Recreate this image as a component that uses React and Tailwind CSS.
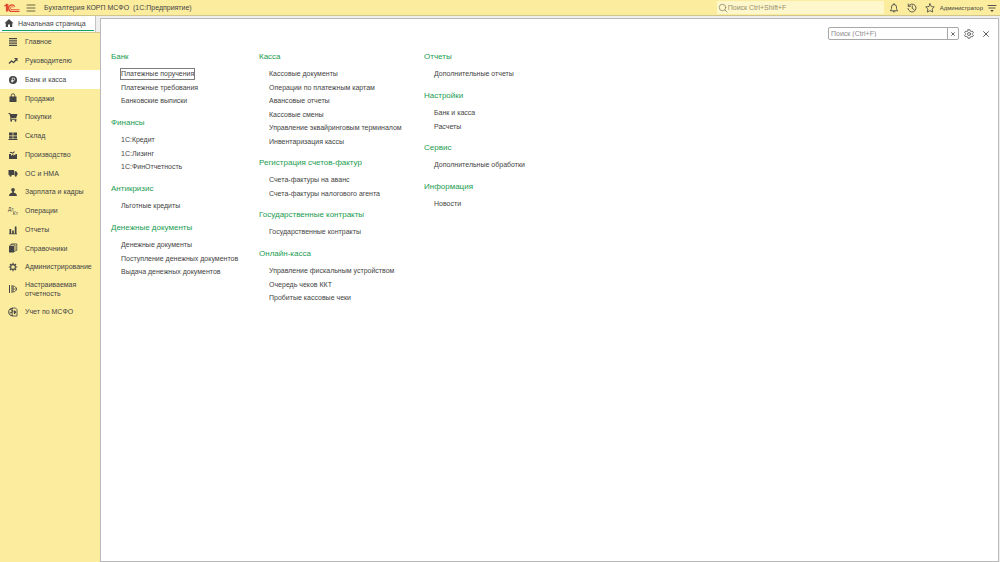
import React from "react";

function Icon({ className = "size-[10px]", viewBox = "0 0 20 20", children }) {
  return (
    <svg aria-hidden="true" viewBox={viewBox} className={`${className} shrink-0`} fill="currentColor">
      {children}
    </svg>
  );
}

const line = { fill: "none", stroke: "currentColor", strokeLinecap: "round", strokeLinejoin: "round" };

const icons = {
  main: <path d="M2 2h16v2.400H2zM2 6.500h16v2.400H2zM2 11h16v2.400H2zM2 15.500h16v2.400H2z" />,
  trend: (
    <>
      <path d="M2 15l5-5 4 3 6-6" {...line} strokeWidth="2.600" strokeLinecap="butt" />
      <path d="M12 4h7v7z" />
    </>
  ),
  bank: (
    <>
      <circle cx="10" cy="10" r="8" />
      <path d="M8.500 15V6h2.500a2.500 2.500 0 0 1 0 5H6.500M6.500 13H11" fill="none" stroke="#ffffff" strokeWidth="1.500" />
    </>
  ),
  bag: (
    <>
      <path d="M3 7h14v11H3z" />
      <path d="M6.500 9V5a3.500 3.500 0 0 1 7 0v4" {...line} strokeWidth="1.800" />
    </>
  ),
  cart: (
    <>
      <path d="M1 2h3.500l1 2H19l-2.500 8H7l-.8 1.500H17V15.500H4l1-3.500L3 4H1z" />
      <circle cx="6.500" cy="17.500" r="1.800" />
      <circle cx="15" cy="17.500" r="1.800" />
    </>
  ),
  store: <path d="M2 3h7.300v6H2zM10.700 3H18v6h-7.300zM2 10.400h7.300V15H2zM10.700 10.400H18V15h-7.300zM1 16h18v2H1z" />,
  factory: (
    <>
      <path d="M2 8h4v3.500L11 8v3.500L16 8h2v10H2z" />
      <path d="M3 5.500l3-2 3 1.500 4-3v3l-4 2.500-3-1.500H3z" />
    </>
  ),
  truck: (
    <>
      <path d="M1 4h11v10H1zM13 6.500h3.500L19 10v4h-6z" />
      <circle cx="5" cy="15" r="2.300" />
      <circle cx="15.500" cy="15" r="2.300" />
    </>
  ),
  person: (
    <>
      <circle cx="10" cy="5.500" r="3.700" />
      <path d="M8.300 8h3.400v3.500c3.800.5 5.800 2 6.300 6.500H2c.5-4.500 2.500-6 6.300-6.500z" />
    </>
  ),
  reports: <path d="M3 8h3.400v9H3zM8.300 11h3.400v6H8.300zM13.600 3H17v14h-3.400zM2 17h16v1.500H2z" />,
  books: (
    <>
      <path d="M2 6h10v13H2z" />
      <path d="M4 5V3.800h10V17h-1M7 3V1.800h10.500V15H16" {...line} strokeWidth="1.600" />
    </>
  ),
  gear: (
    <>
      <circle cx="10" cy="10" r="4.800" {...line} strokeWidth="2.200" />
      <path
        d="M10 1.500v3M10 15.500v3M1.500 10h3M15.500 10h3M4 4l2 2M14 14l2 2M4 16l2-2M14 6l2-2"
        {...line}
        strokeWidth="2.400"
        strokeLinecap="butt"
      />
    </>
  ),
  custom: (
    <>
      <path d="M3 3v14M8 3v14" {...line} strokeWidth="2" />
      <path d="M11 4c3 .5 6 3 6 6s-3 5.500-6 6z" {...line} strokeWidth="1.700" />
      <path d="M11 10h6" {...line} strokeWidth="1.400" />
    </>
  ),
  ifrs: (
    <>
      <path d="M9 2.500A7.500 7.500 0 1 0 9 17.500M5 5l4 2-1 4-4 1" {...line} strokeWidth="2" />
      <path d="M9 2h6l3 3v13H9z" {...line} strokeWidth="1.700" />
      <path d="M11 7h3l2.500 3-2.500 4h-2z" />
    </>
  ),
};

function OperationsIcon() {
  return (
    <span aria-hidden="true" className="flex w-[10px] shrink-0 flex-col text-[5px] leading-[4px]">
      <span>Дт</span>
      <span className="text-right">Кт</span>
    </span>
  );
}

const sections = [
  ["Главное", "main"],
  ["Руководителю", "trend"],
  ["Банк и касса", "bank"],
  ["Продажи", "bag"],
  ["Покупки", "cart"],
  ["Склад", "store"],
  ["Производство", "factory"],
  ["ОС и НМА", "truck"],
  ["Зарплата и кадры", "person"],
  ["Операции", "operations"],
  ["Отчеты", "reports"],
  ["Справочники", "books"],
  ["Администрирование", "gear"],
  ["Настраиваемая отчетность", "custom"],
  ["Учет по МСФО", "ifrs"],
];

const columns = [
  [
    ["Банк", ["Платежные поручения", "Платежные требования", "Банковские выписки"]],
    ["Финансы", ["1С:Кредит", "1С:Лизинг", "1С:ФинОтчетность"]],
    ["Антикризис", ["Льготные кредиты"]],
    ["Денежные документы", ["Денежные документы", "Поступление денежных документов", "Выдача денежных документов"]],
  ],
  [
    [
      "Касса",
      [
        "Кассовые документы",
        "Операции по платежным картам",
        "Авансовые отчеты",
        "Кассовые смены",
        "Управление эквайринговым терминалом",
        "Инвентаризация кассы",
      ],
    ],
    ["Регистрация счетов-фактур", ["Счета-фактуры на аванс", "Счета-фактуры налогового агента"]],
    ["Государственные контракты", ["Государственные контракты"]],
    ["Онлайн-касса", ["Управление фискальным устройством", "Очередь чеков ККТ", "Пробитые кассовые чеки"]],
  ],
  [
    ["Отчеты", ["Дополнительные отчеты"]],
    ["Настройки", ["Банк и касса", "Расчеты"]],
    ["Сервис", ["Дополнительные обработки"]],
    ["Информация", ["Новости"]],
  ],
];

function Header() {
  return (
    <header className="flex h-4 items-center border-b border-[#cfc58d] bg-[#fbec9e] pr-[3px] pl-1">
      <svg role="img" aria-label="1С" viewBox="0 0 32 20" className="h-[10px] w-4 shrink-0" fill="none" stroke="#e0442c">
        <path d="M1 6.500L5 3v14M7.500 2v15" strokeWidth="2.400" />
        <path d="M21.500 7.500A6.500 6.500 0 1 0 16 17h15" strokeWidth="2.400" />
        <path d="M18.500 9A3 3 0 1 0 16 13.500h15" strokeWidth="1.800" />
      </svg>
      <button type="button" aria-label="Меню" className="ml-[6px] text-[#5c563c]">
        <Icon>
          <path d="M2 4h16M2 10h16M2 16h16" {...line} strokeWidth="1.800" />
        </Icon>
      </button>
      <h1 className="ml-2 whitespace-pre text-[7px] leading-[10px]">Бухгалтерия КОРП МСФО  (1С:Предприятие)</h1>
      <label className="ml-auto flex h-[13px] w-[167px] items-center bg-[#fef7cb] pl-px text-[#8b8566]">
        <Icon>
          <circle cx="9" cy="9" r="6.500" {...line} strokeWidth="1.600" />
          <path d="M14 14l4 4" {...line} strokeWidth="1.600" />
        </Icon>
        <input
          type="search"
          aria-label="Глобальный поиск"
          placeholder="Поиск Ctrl+Shift+F"
          className="min-w-0 flex-1 bg-transparent text-[7px] leading-[10px] outline-none placeholder:text-[#968f6e]"
        />
      </label>
      <div className="ml-[5px] flex items-center gap-2">
        <button type="button" aria-label="Уведомления">
          <Icon>
            <path d="M3 15c2-2 2-3 2-7a5 5 0 0 1 10 0c0 4 0 5 2 7zM10 1v2M8.500 17.500h3" {...line} strokeWidth="1.700" />
          </Icon>
        </button>
        <button type="button" aria-label="История">
          <Icon>
            <path d="M3 6a8 8 0 1 1-1 5M2.500 2v4.500H7M10.500 5.500V11l3.500 2" {...line} strokeWidth="1.700" />
          </Icon>
        </button>
        <button type="button" aria-label="Избранное">
          <Icon>
            <path d="M10 1.500l2.600 5.600 6 .7-4.400 4.200 1.200 6.200L10 15.200l-5.400 3 1.200-6.200L1.400 7.800l6-.7z" {...line} strokeWidth="1.600" />
          </Icon>
        </button>
      </div>
      <button type="button" className="ml-[5px] text-[6px] leading-[8px]">
        Администратор
      </button>
      <button type="button" aria-label="Сервис" className="ml-1">
        <Icon>
          <path d="M2 5h16M4 10h12" {...line} strokeWidth="1.800" />
          <path d="M6.500 14h7L10 18z" />
        </Icon>
      </button>
    </header>
  );
}

function Sidebar() {
  return (
    <aside className="flex w-[100px] shrink-0 flex-col">
      <div className="flex h-4 pr-1">
        <a href="#home" className="flex flex-1 flex-col border-r border-[#c4c4c4] bg-white pr-px pl-[2px]">
          <span className="flex flex-1 items-center gap-[4px] pl-[2px] text-[7px] leading-[9px] whitespace-nowrap">
            <Icon>
              <path d="M10 2l9 8.500h-2.500V18H12v-5H8v5H3.500v-7.500H1z" />
            </Icon>
            Начальная страница
          </span>
          <span className="mb-px h-px bg-[#10a456]" />
        </a>
      </div>
      <nav className="flex-1 bg-[#fbec9e] inset-shadow-[0_1px_#d5ca8c]">
        <ul>
          {sections.map(([label, icon]) => (
            <li key={label} className="flex min-h-[19px] nth-[4n]:min-h-[18px]">
              <a
                href="#section"
                aria-current={icon === "bank" ? "page" : undefined}
                className="flex flex-1 items-center gap-[7px] py-[4px] pr-1 pl-2 text-[7px] leading-[9px] aria-[current=page]:bg-white"
              >
                {icon === "operations" ? <OperationsIcon /> : <Icon>{icons[icon]}</Icon>}
                {label}
              </a>
            </li>
          ))}
        </ul>
      </nav>
    </aside>
  );
}

function Toolbar() {
  return (
    <div className="flex items-center justify-end pt-[8px] pr-[8px]">
      <div className="flex h-[13px] w-[131px] rounded-[2px] border border-[#a8a8a8]">
        <input
          type="text"
          aria-label="Поиск"
          placeholder="Поиск (Ctrl+F)"
          className="min-w-0 flex-1 pl-[2px] text-[7px] leading-[9px] outline-none placeholder:text-[#8c8c8c]"
        />
        <button
          type="button"
          aria-label="Очистить"
          className="flex w-[11px] items-center justify-center border-l border-[#a8a8a8]"
        >
          <Icon className="size-[4px]">
            <path d="M3 3l14 14M17 3L3 17" {...line} strokeWidth="4" />
          </Icon>
        </button>
      </div>
      <button type="button" aria-label="Настройка" className="ml-[5px]">
        <Icon>
          <circle cx="10" cy="10" r="3" {...line} strokeWidth="1.500" />
          <path
            d="M8 1.500h4l.6 2.600 1.600 1 2.600-.9 2 3.400-2 1.800v1.200l2 1.800-2 3.400-2.600-.9-1.600 1-.6 2.600H8l-.6-2.600-1.600-1-2.600.9-2-3.400 2-1.800V9.400l-2-1.800 2-3.400 2.600.9 1.600-1z"
            {...line}
            strokeWidth="1.500"
          />
        </Icon>
      </button>
      <button type="button" aria-label="Закрыть" className="ml-[8px]">
        <Icon className="size-[8px]">
          <path d="M4 4l12 12M16 4L4 16" {...line} strokeWidth="2.200" />
        </Icon>
      </button>
    </div>
  );
}

function Group({ title, items, focused }) {
  return (
    <section className="pb-[9px]">
      <h2 className="pb-[4px] text-[8px] leading-[12px] text-[#1a9c50]">{title}</h2>
      <ul className="pl-[10px]">
        {items.map((item) => (
          <li key={item} className="flex items-center odd:h-[14px] even:h-[13px]">
            <a
              href="#command"
              className={
                item === focused
                  ? "text-[7px] leading-[10px] outline outline-[#7d7d7d]"
                  : "text-[7px] leading-[10px]"
              }
            >
              {item}
            </a>
          </li>
        ))}
      </ul>
    </section>
  );
}

export default function App() {
  return (
    <div className="flex min-h-screen flex-col bg-[#efefef] font-['Liberation_Sans',Arial,sans-serif] text-[#444444]">
      <Header />
      <div className="flex flex-1">
        <Sidebar />
        <main className="mt-[2px] mr-px flex-1 border border-[#b9b9b9] bg-white">
          <Toolbar />
          <div className="flex items-start pt-[11px] pl-[10px] whitespace-nowrap">
            {columns.map((groups, index) => (
              <div key={index} className="nth-1:w-[148px] nth-2:w-[165px]">
                {groups.map(([title, items]) => (
                  <Group key={title} title={title} items={items} focused="Платежные поручения" />
                ))}
              </div>
            ))}
          </div>
        </main>
      </div>
    </div>
  );
}
